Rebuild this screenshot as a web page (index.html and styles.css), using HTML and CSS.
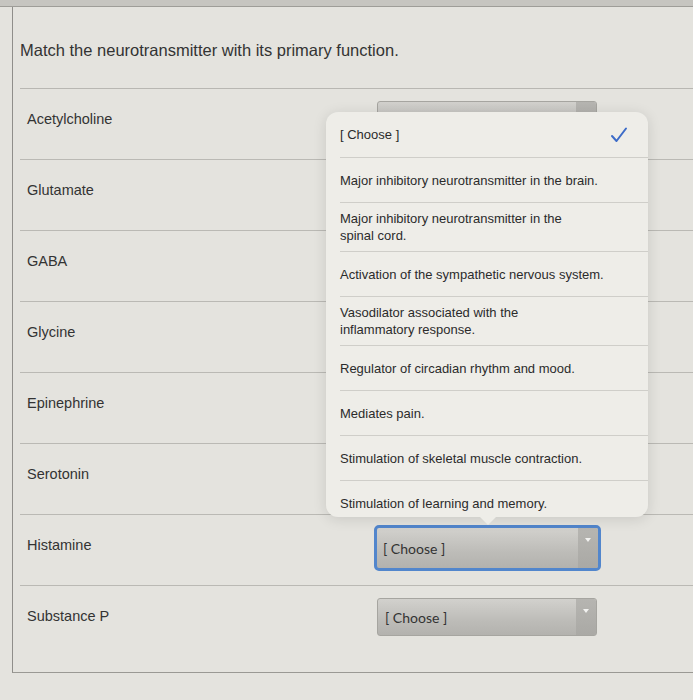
FILE: index.html
```html
<!DOCTYPE html>
<html lang="en">
<head>
<meta charset="utf-8">
<title>Matching question</title>
<link rel="stylesheet" href="styles.css">
</head>
<body>
<div class="topbar"></div>
<div class="quiz">
  <p class="question">Match the neurotransmitter with its primary function.</p>
  <div class="answers">
    <div class="row"><span class="label">Acetylcholine</span><div class="select covered"><span>[ Choose ]</span><i class="arrow"></i></div></div>
    <div class="row"><span class="label">Glutamate</span><div class="select covered"><span>[ Choose ]</span><i class="arrow"></i></div></div>
    <div class="row"><span class="label">GABA</span><div class="select covered"><span>[ Choose ]</span><i class="arrow"></i></div></div>
    <div class="row"><span class="label">Glycine</span><div class="select covered"><span>[ Choose ]</span><i class="arrow"></i></div></div>
    <div class="row"><span class="label">Epinephrine</span><div class="select covered"><span>[ Choose ]</span><i class="arrow"></i></div></div>
    <div class="row"><span class="label">Serotonin</span><div class="select covered"><span>[ Choose ]</span><i class="arrow"></i></div></div>
    <div class="row"><span class="label">Histamine</span><div class="select focused"><span>[ Choose ]</span><i class="arrow"></i></div></div>
    <div class="row last"><span class="label">Substance P</span><div class="select"><span>[ Choose ]</span><i class="arrow"></i></div></div>
  </div>

  <div class="popup">
    <ul class="menu">
      <li class="item selected"><span>[ Choose ]</span>
        <svg class="check" width="18" height="16" viewBox="0 0 18 16"><path d="M2 9 L6.5 14 L16 1.5" fill="none" stroke="#3d6cc8" stroke-width="2" stroke-linecap="round" stroke-linejoin="round"/></svg>
      </li>
      <li class="item"><span>Major inhibitory neurotransmitter in the brain.</span></li>
      <li class="item"><span>Major inhibitory neurotransmitter in the<br>spinal cord.</span></li>
      <li class="item"><span>Activation of the sympathetic nervous system.</span></li>
      <li class="item"><span>Vasodilator associated with the<br>inflammatory response.</span></li>
      <li class="item"><span>Regulator of circadian rhythm and mood.</span></li>
      <li class="item"><span>Mediates pain.</span></li>
      <li class="item"><span>Stimulation of skeletal muscle contraction.</span></li>
      <li class="item"><span>Stimulation of learning and memory.</span></li>
    </ul>
  </div>
</div>
</body>
</html>
```

FILE: styles.css
```css
html, body {
  margin: 0;
  padding: 0;
}
body {
  background: #e4e3de;
  font-family: "Liberation Sans", Arial, sans-serif;
  color: #333;
  width: 693px;
  height: 700px;
  overflow: hidden;
  position: relative;
}
.topbar {
  height: 6px;
  background: #c6c5c0;
  border-bottom: 1px solid #9e9d98;
}
.quiz {
  margin-left: 12px;
  padding-left: 7px;
  border-left: 1px solid #8f8e8a;
  border-bottom: 1px solid #9a9994;
  height: 666px;
  box-sizing: border-box;
  display: flex;
  flex-direction: column;
}
.question {
  margin: 0;
  padding-top: 33px;
  height: 48px;
  font-size: 16.5px;
  line-height: 20px;
  color: #333;
}
.answers {
  border-top: 1px solid #b8b7b2;
  flex: 1;
  display: flex;
  flex-direction: column;
}
.row {
  height: 71px;
  box-sizing: border-box;
  border-bottom: 1px solid #bab9b4;
  display: flex;
  align-items: flex-start;
}
.row.last {
  border-bottom: none;
  flex: 1;
}
.label {
  width: 357px;
  flex: none;
  box-sizing: border-box;
  padding: 20px 0 0 7px;
  font-size: 14.5px;
  line-height: 20px;
  color: #333;
}
.select {
  margin-top: 12px;
  width: 220px;
  height: 38px;
  box-sizing: border-box;
  border: 1px solid #a6a5a0;
  border-radius: 3px;
  background: linear-gradient(#d2d1cd, #bdbcb8 60%, #b3b2ae);
  display: flex;
  align-items: center;
  font-family: Lato, "Open Sans", sans-serif;
  font-size: 14px;
  color: #333;
  overflow: hidden;
}
.select span {
  flex: 1;
  padding-left: 7px;
}
.select.covered span {
  visibility: hidden;
}
.select .arrow {
  width: 20px;
  align-self: stretch;
  background: linear-gradient(#b6b5b1, #aaa9a5);
  position: relative;
}
.select .arrow::after {
  content: "";
  position: absolute;
  left: 7px;
  top: 10px;
  border-left: 3px solid transparent;
  border-right: 3px solid transparent;
  border-top: 4px solid #f2f2f0;
}
.select.focused {
  margin-top: 10px;
  height: 46px;
  width: 227px;
  margin-left: -3px;
  border: 3px solid #5286cc;
  border-radius: 5px;
}
.select.focused span {
  padding-left: 6px;
}

/* dropdown menu */
.popup {
  position: absolute;
  left: 326px;
  top: 112px;
  width: 322px;
  height: 405px;
}
.popup::after {
  content: "";
  position: absolute;
  left: 154px;
  bottom: -8px;
  border-left: 8px solid transparent;
  border-right: 8px solid transparent;
  border-top: 8px solid #eeede8;
}
.menu {
  margin: 0;
  padding: 0;
  list-style: none;
  height: 100%;
  overflow: hidden;
  border-radius: 12px;
  background: #eeede8;
  box-shadow: 0 2px 14px rgba(0, 0, 0, 0.12);
  font-family: "Liberation Sans", Arial, sans-serif;
  font-size: 13px;
  color: #2b2b2b;
}
.item {
  min-height: 45px;
  box-sizing: border-box;
  margin-left: 14px;
  padding: 7px 20px 7px 0;
  line-height: 17px;
  display: flex;
  align-items: center;
  border-bottom: 1px solid #cfcec9;
}
.item:last-child {
  border-bottom: none;
}
.item span {
  flex: 1;
}
.item.selected {
  min-height: 46px;
}
.check {
  flex: none;
}
```
